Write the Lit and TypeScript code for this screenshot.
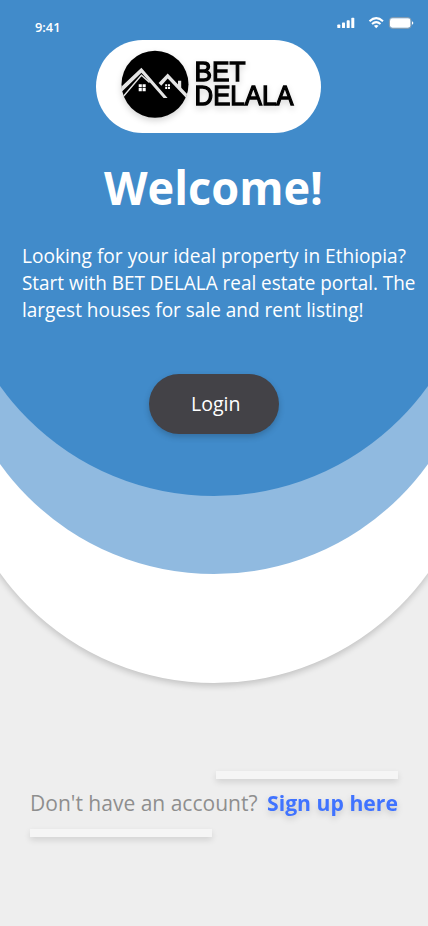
import { LitElement, html, svg, css } from "lit";
import { customElement } from "lit/decorators.js";

// One line of text fitted to a fixed measure.
const line = (cls: string, text: string, width: number, height: number, baseline: number) => html`
  <svg class="line ${cls}" width=${width} height=${height} viewBox="0 0 ${width} ${height}">
    <text x="0" y=${baseline} textLength=${width} lengthAdjust="spacingAndGlyphs">${text}</text>
  </svg>`;

const panes = (x: number, y: number, s: number) => svg`
  <path fill="#fff" d="M${x} ${y}h${s}v${s}h${-s}z M${x + s + 0.8} ${y}h${s}v${s}h${-s}z
    M${x} ${y + s + 0.8}h${s}v${s}h${-s}z M${x + s + 0.8} ${y + s + 0.8}h${s}v${s}h${-s}z"/>`;

@customElement("app-root")
export class AppRoot extends LitElement {
  static styles = css`
    :host {
      display: block;
      position: relative;
      width: 428px;
      height: 926px;
      overflow: hidden;
      background: #eeeeee;
      font-family: "Open Sans", "Noto Sans", sans-serif;
    }
    .line { display: block; overflow: visible; flex: none; }
    .arc {
      position: absolute;
      left: -49px;
      top: 0;
      width: 526px;
      border-radius: 0 0 263px 263px;
    }
    .outer { height: 683px; background: #fff; box-shadow: 0 3px 6px rgba(0, 0, 0, 0.18); }
    .middle { height: 574px; background: #90bae0; }
    .inner { height: 496px; background: #418bca; }
    .screen {
      position: relative;
      display: flex;
      flex-direction: column;
      height: 926px;
    }
    .status {
      display: flex;
      justify-content: space-between;
      height: 40px;
      padding: 0 14px 0 35px;
    }
    .time { font-size: 13px; font-weight: 600; fill: #fff; }
    .logo {
      width: 225px;
      height: 93px;
      margin-left: 96px;
      border-radius: 46.5px;
      background: #fff;
    }
    .logo svg { display: block; filter: drop-shadow(0 3px 3px rgba(0, 0, 0, 0.16)); }
    .brand {
      font-family: "Liberation Sans", sans-serif;
      font-size: 27.5px;
      stroke: #000;
      stroke-width: 1.3px;
    }
    h1 { margin: 20px 0 0 104px; height: 70px; }
    .title { font-size: 46.5px; font-weight: 700; fill: #fff; }
    p { margin: 20px 0 0 21.5px; height: 81px; }
    .body { font-size: 19.5px; fill: #fff; }
    button {
      width: 130px;
      height: 60px;
      margin: 50px 0 0 149px;
      padding: 0 0 0 41.5px;
      border: 0;
      border-radius: 30px;
      background: #434247;
      box-shadow: 0 3px 6px rgba(0, 0, 0, 0.2);
      font-family: inherit;
    }
    .signup {
      display: flex;
      flex-direction: column;
      width: 368px;
      margin: 337.3px 0 0 30px;
    }
    .bar {
      width: 182px;
      height: 8px;
      background: #f5f5f5;
      box-shadow: 0 3px 6px rgba(0, 0, 0, 0.12);
    }
    .bar.end { align-self: flex-end; }
    .row { display: flex; justify-content: space-between; height: 50px; }
    .ask { font-size: 22px; font-weight: 400; fill: #8e8e8e; }
    .link {
      font-size: 22px;
      font-weight: 700;
      fill: #4073ff;
      filter: drop-shadow(0 3px 3px rgba(0, 0, 0, 0.16));
    }
  `;

  render() {
    return html`
      <div class="arc outer"></div>
      <div class="arc middle"></div>
      <div class="arc inner"></div>
      <div class="screen">
        <div class="status">
          ${line("time", "9:41", 25.5, 40, 32)}
          <svg width="78" height="40" viewBox="336 0 78 40" fill="#fff">
            <rect x="337.3" y="24.5" width="3" height="3.6" rx=".7"/>
            <rect x="342" y="22.5" width="3" height="5.6" rx=".7"/>
            <rect x="346.7" y="20.2" width="3" height="7.9" rx=".7"/>
            <rect x="351.3" y="17.8" width="3" height="10.3" rx=".7"/>
            <g fill="none" stroke="#fff" stroke-width="2">
              <path d="M369.5 21.3Q376.2 15 383 21.3"/>
              <path d="M372 24Q376.2 20.2 380.5 24"/>
            </g>
            <path d="M373.9 25.8Q376.2 24 378.6 25.8L376.2 28.3z"/>
            <rect x="389.4" y="17.7" width="21.6" height="10.6" rx="3" fill="none" stroke="#a8a8a8" stroke-width=".8"/>
            <rect x="390" y="18.3" width="20.4" height="9.4" rx="2.4"/>
            <path d="M412 21.2q1.3.5 1.3 1.8t-1.3 1.8z"/>
          </svg>
        </div>
        <div class="logo">
          <svg width="225" height="93" viewBox="96 40 225 93">
            <defs><clipPath id="disc"><circle cx="155" cy="84.3" r="33.7"/></clipPath></defs>
            <circle cx="155" cy="84.3" r="33.5"/>
            <g clip-path="url(#disc)" fill="#e4e4e4">
              <path d="M178 80.8h3.2v11l-3.2-3.4z"/>
              <path d="M141.4 67.8L167.6 98H163.6L141.4 72.8L120 93.5V88z"/>
              <path d="M167.7 73.6L189 96V101L167.7 78.6L161.3 85.8L158.6 83z"/>
              <path fill="none" stroke="#e4e4e4" stroke-width="1.4" d="M122 98L141.4 75.2L149.5 82.5"/>
            </g>
            ${panes(138.7, 84.2, 3.1)}
            ${panes(165.2, 84.3, 2)}
            <text class="brand" x="194.5" y="81" textLength="51" lengthAdjust="spacingAndGlyphs">BET</text>
            <text class="brand" x="194.5" y="105" textLength="99" lengthAdjust="spacingAndGlyphs">DELALA</text>
          </svg>
        </div>
        <h1>${line("title", "Welcome!", 219, 70, 51.5)}</h1>
        <p>
          ${line("body", "Looking for your ideal property in Ethiopia?", 384, 27, 20)}
          ${line("body", "Start with BET DELALA real estate portal. The", 393.5, 27, 20)}
          ${line("body", "largest houses for sale and rent listing!", 341.5, 27, 20)}
        </p>
        <button>${line("body", "Login", 49.5, 60, 37)}</button>
        <div class="signup">
          <div class="bar end"></div>
          <div class="row">
            ${line("ask", "Don't have an account?", 227.5, 50, 31.7)}
            ${line("link", "Sign up here", 131, 50, 31.7)}
          </div>
          <div class="bar"></div>
        </div>
      </div>
    `;
  }
}
